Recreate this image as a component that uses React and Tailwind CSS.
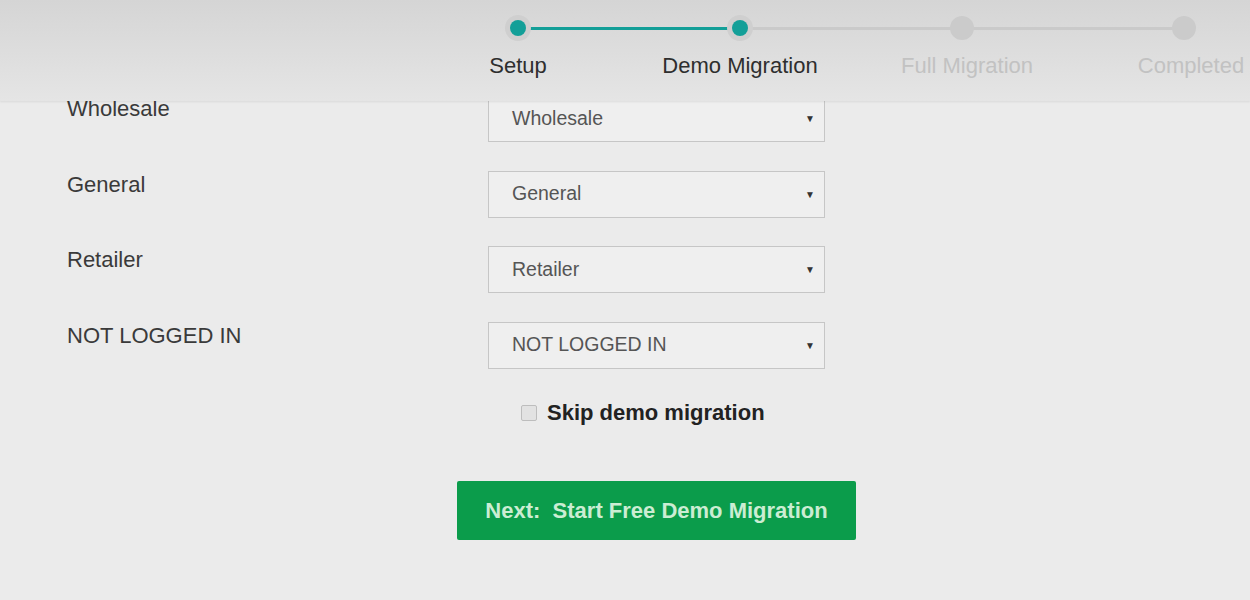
import React from 'react';

const steps = [
    { label: 'Setup', done: true, shift: '' },
    { label: 'Demo Migration', done: true, shift: '' },
    { label: 'Full Migration', done: false, shift: 'pl-[10px]' },
    { label: 'Completed', done: false, shift: 'pl-[14px]' },
];

const groups = ['Wholesale', 'General', 'Retailer', 'NOT LOGGED IN'];

const Stepper = () => (
    <div className="absolute top-0 inset-x-0 h-[101px] bg-gradient-to-b from-[#d5d5d5] to-[#e5e5e5] shadow-[0_1px_2px_rgba(0,0,0,0.08)] z-10">
        <div className="relative ml-[407px] w-[888px]">
            {/* track */}
            <div className="absolute top-[27px] left-[111px] w-[666px] h-[3px] bg-[#cacaca]" />
            <div className="absolute top-[27px] left-[111px] w-[222px] h-[3px] bg-[#139f98]" />
            <div className="grid grid-cols-4">
                {steps.map((step) => (
                    <div key={step.label} className="flex flex-col items-center">
                        <div className="h-[56px] flex items-center justify-center">
                            {step.done ? (
                                <div className="relative w-[26px] h-[26px] rounded-full bg-[#cfcfcf] flex items-center justify-center">
                                    <div className="w-[16px] h-[16px] rounded-full bg-[#139f98]" />
                                </div>
                            ) : (
                                <div className="relative w-[24px] h-[24px] rounded-full bg-[#cbcbcb]" />
                            )}
                        </div>
                        <span
                            className={`text-[22px] leading-[20px] whitespace-nowrap ${step.shift} ${step.done ? 'text-[#2e2e2e]' : 'text-[#c2c2c2]'}`}
                        >
                            {step.label}
                        </span>
                    </div>
                ))}
            </div>
        </div>
    </div>
);

const GroupRow = ({ name }) => (
    <div className="flex h-[47px]">
        <div className="w-[488px] pl-[67px] pt-[2px] text-[22px] leading-[24px] text-[#3a3a3a]">{name}</div>
        <div className="w-[337px] h-[47px] border border-[#c6c6c6] bg-[#efefef] flex items-center justify-between pl-[23px] pr-[9px]">
            <span className="text-[19.5px] text-[#555]">{name}</span>
            <span className="text-[10px] text-[#333]">▼</span>
        </div>
    </div>
);

export default function App() {
    return (
        <div className="relative h-[600px] w-[1250px] overflow-hidden bg-[#ebebeb] font-['Liberation_Sans',Arial,sans-serif]">
            <Stepper />

            <div className="pt-[95px]">
                <div className="flex flex-col gap-[28.5px]">
                    {groups.map((g) => (
                        <GroupRow key={g} name={g} />
                    ))}
                </div>

                <label className="mt-[31px] ml-[521px] flex items-center gap-[10px] w-max">
                    <span className="w-[16px] h-[16px] border border-[#bdbdbd] rounded-[2px] bg-[#e2e2e2]" />
                    <span className="text-[22px] leading-[26px] font-bold text-[#222]">Skip demo migration</span>
                </label>

                <div className="mt-[55px] ml-[457px]">
                    <button className="w-[399px] h-[59px] bg-[#0b9c4b] text-[#cbedd3] text-[22px] font-bold rounded-[2px]">
                        Next:&nbsp; Start Free Demo Migration
                    </button>
                </div>
            </div>
        </div>
    );
}
